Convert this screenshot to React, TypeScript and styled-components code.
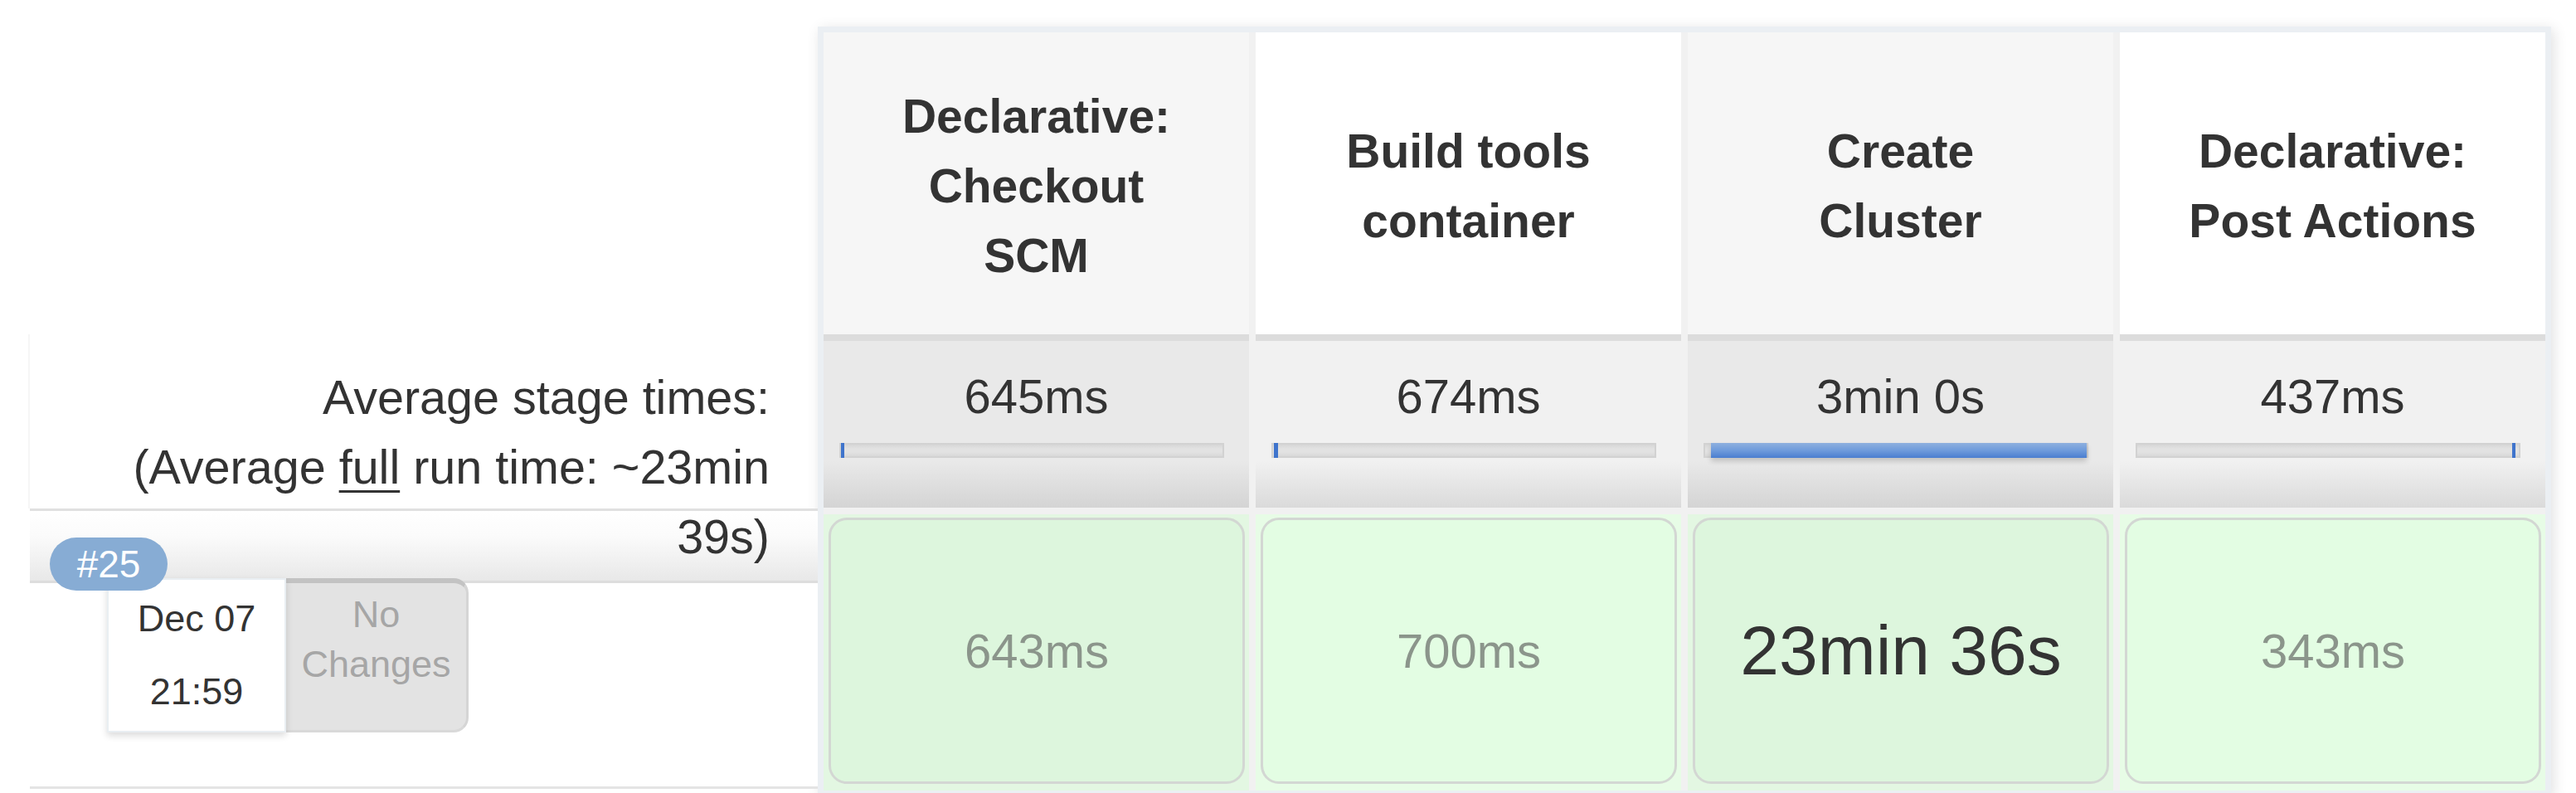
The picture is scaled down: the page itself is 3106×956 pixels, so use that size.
import React from 'react';
import styled, { createGlobalStyle } from 'styled-components';

const GlobalStyle = createGlobalStyle`
  html, body { margin: 0; padding: 0; background: #fff; }
  body { font-family: "Liberation Sans", Arial, Helvetica, sans-serif; color: #333; }
`;

const Page = styled.div`
  display: flex;
  align-items: flex-start;
  width: 3106px;
  height: 956px;
  overflow: hidden;
`;

const LeftColumn = styled.div`
  width: 986px;
  flex: none;
  display: flex;
  flex-direction: column;
`;

const HeaderSpacer = styled.div`
  height: 403px;
`;

const AvgLabel = styled.div`
  position: relative;
  z-index: 1;
  height: 210px;
  box-sizing: border-box;
  margin-left: 34px;
  border-left: 2px solid #f6f6f6;
  padding: 34px 58px 0 72px;
  text-align: right;
  font-size: 57.5px;
  line-height: 84px;
  color: #333;
`;

const Underlined = styled.span`
  text-decoration: underline;
  text-decoration-thickness: 3px;
  text-underline-offset: 8px;
`;

const BuildLabelCell = styled.div`
  position: relative;
  height: 338px;
  box-sizing: border-box;
  margin-left: 36px;
  border-top: 3px solid #e0e0e0;
  border-bottom: 3px solid #e4e4e4;
  background: linear-gradient(
    to bottom,
    #ffffff 0px,
    #fbfbfb 30px,
    #e8e8e8 84px,
    #dddddd 84px,
    #dddddd 87px,
    #ffffff 87px
  );
  padding: 81px 0 0 93px;
  display: flex;
  align-items: flex-start;
`;

const BuildBadge = styled.div`
  position: absolute;
  left: 24px;
  top: 32px;
  width: 142px;
  height: 64px;
  border-radius: 32px;
  background: #87acd4;
  color: #fff;
  font-size: 46px;
  line-height: 64px;
  text-align: center;
  z-index: 2;
`;

const DateBox = styled.div`
  position: relative;
  z-index: 1;
  width: 216px;
  height: 186px;
  box-sizing: border-box;
  background: #fff;
  border: 2px solid #e9eef2;
  box-shadow: 0 4px 8px rgba(0, 0, 0, 0.14);
  display: flex;
  flex-direction: column;
  align-items: center;
  justify-content: center;
  font-size: 45px;
  line-height: 88px;
  color: #333;
`;

const ChangesBox = styled.div`
  width: 220px;
  height: 186px;
  box-sizing: border-box;
  background: #e3e3e3;
  border-top: 6px solid #c3c3c3;
  border-right: 3px solid #d5d5d5;
  border-bottom: 3px solid #d9d9d9;
  border-radius: 0 18px 18px 0;
  padding: 8px 4px 0 4px;
  text-align: center;
  font-size: 45px;
  line-height: 60px;
  color: #a6a6a6;
`;

const StageTable = styled.div`
  margin-top: 32px;
  width: 2090px;
  flex: none;
  box-sizing: border-box;
  border: 7px solid #ebeff3;
  background: #f1f1f1;
  box-shadow: 3px 3px 16px rgba(0, 0, 0, 0.12);
  display: flex;
  flex-direction: column;
`;

const Row = styled.div<{ $height: number; $gapTop?: number }>`
  display: grid;
  grid-template-columns: repeat(4, 513px);
  column-gap: 8px;
  height: ${(p) => p.$height}px;
  margin-top: ${(p) => p.$gapTop ?? 0}px;
`;

const HeaderCell = styled.div<{ $alt: boolean }>`
  box-sizing: border-box;
  padding-top: 6px;
  background: ${(p) => (p.$alt ? '#ffffff' : '#f6f6f6')};
  display: flex;
  align-items: center;
  justify-content: center;
`;

const StageName = styled.div`
  max-width: 372px;
  text-align: center;
  font-weight: bold;
  font-size: 57px;
  line-height: 84px;
  color: #333;
`;

const AvgCell = styled.div<{ $alt: boolean }>`
  box-sizing: border-box;
  border-top: 8px solid #dcdcdc;
  background: ${(p) =>
    p.$alt
      ? 'linear-gradient(to bottom, #f1f1f1 0%, #f1f1f1 72%, #dadada 100%)'
      : 'linear-gradient(to bottom, #e9e9e9 0%, #e9e9e9 72%, #d4d4d4 100%)'};
  padding-top: 25px;
  display: flex;
  flex-direction: column;
`;

const AvgTime = styled.div`
  text-align: center;
  font-size: 58px;
  line-height: 84px;
  color: #333;
`;

const ProgressTrack = styled.div`
  position: relative;
  margin: 14px 0 0 19px;
  width: 464px;
  height: 18px;
  box-sizing: border-box;
  border: 2px solid #d2d2d2;
  background: linear-gradient(to bottom, #d6d6d6 0%, #e2e2e2 35%, #e2e2e2 65%, #d8d8d8 100%);
`;

const ProgressFill = styled.div<{ $wide: boolean }>`
  position: absolute;
  top: -2px;
  bottom: -2px;
  background: ${(p) =>
    p.$wide
      ? 'linear-gradient(to bottom, #8eb0df 0%, #6f9bdb 50%, #4a7ed0 100%)'
      : '#3f74cc'};
  box-shadow: ${(p) => (p.$wide ? '0 4px 6px rgba(0,0,0,0.18)' : 'none')};
`;

const BuildStageCell = styled.div<{ $alt: boolean }>`
  box-sizing: border-box;
  background: ${(p) => (p.$alt ? '#e7fce6' : '#e3f7e2')};
  padding: 4px 5px 8px 6px;
  display: flex;
`;

const StageCard = styled.div<{ $alt: boolean; $long: boolean }>`
  flex: 1;
  box-sizing: border-box;
  border: 3px solid #d3d7d3;
  border-radius: 22px;
  background: ${(p) => (p.$alt ? '#e3fde3' : '#ddf6dd')};
  display: flex;
  align-items: center;
  justify-content: center;
  font-size: ${(p) => (p.$long ? '84px' : '58px')};
  color: ${(p) => (p.$long ? '#333333' : '#8b958b')};
`;

type Stage = {
  name: string;
  avg: string;
  barLeft: number;
  barWidth: number;
  run: string;
  long: boolean;
};

const stages: Stage[] = [
  { name: 'Declarative: Checkout SCM', avg: '645ms', barLeft: 0, barWidth: 0.9, run: '643ms', long: false },
  { name: 'Build tools container', avg: '674ms', barLeft: 0.3, barWidth: 0.9, run: '700ms', long: false },
  { name: 'Create Cluster', avg: '3min 0s', barLeft: 1.6, barWidth: 98.4, run: '23min 36s', long: true },
  { name: 'Declarative: Post Actions', avg: '437ms', barLeft: 98.2, barWidth: 0.9, run: '343ms', long: false },
];

export default function App() {
  return (
    <>
      <GlobalStyle />
      <Page>
        <LeftColumn>
          <HeaderSpacer />
          <AvgLabel>
            Average stage times:
            <br />
            (Average <Underlined>full</Underlined> run time: ~23min 39s)
          </AvgLabel>
          <BuildLabelCell>
            <BuildBadge>#25</BuildBadge>
            <DateBox>
              <div>Dec 07</div>
              <div>21:59</div>
            </DateBox>
            <ChangesBox>No Changes</ChangesBox>
          </BuildLabelCell>
        </LeftColumn>
        <StageTable>
          <Row $height={364}>
            {stages.map((s, i) => (
              <HeaderCell key={s.name} $alt={i % 2 === 1}>
                <StageName>{s.name}</StageName>
              </HeaderCell>
            ))}
          </Row>
          <Row $height={209}>
            {stages.map((s, i) => (
              <AvgCell key={s.name} $alt={i % 2 === 1}>
                <AvgTime>{s.avg}</AvgTime>
                <ProgressTrack>
                  <ProgressFill
                    $wide={s.barWidth > 10}
                    style={{ left: `${s.barLeft}%`, width: `${s.barWidth}%` }}
                  />
                </ProgressTrack>
              </AvgCell>
            ))}
          </Row>
          <Row $height={333} $gapTop={8}>
            {stages.map((s, i) => (
              <BuildStageCell key={s.name} $alt={i % 2 === 1}>
                <StageCard $alt={i % 2 === 1} $long={s.long}>
                  {s.run}
                </StageCard>
              </BuildStageCell>
            ))}
          </Row>
        </StageTable>
      </Page>
    </>
  );
}
